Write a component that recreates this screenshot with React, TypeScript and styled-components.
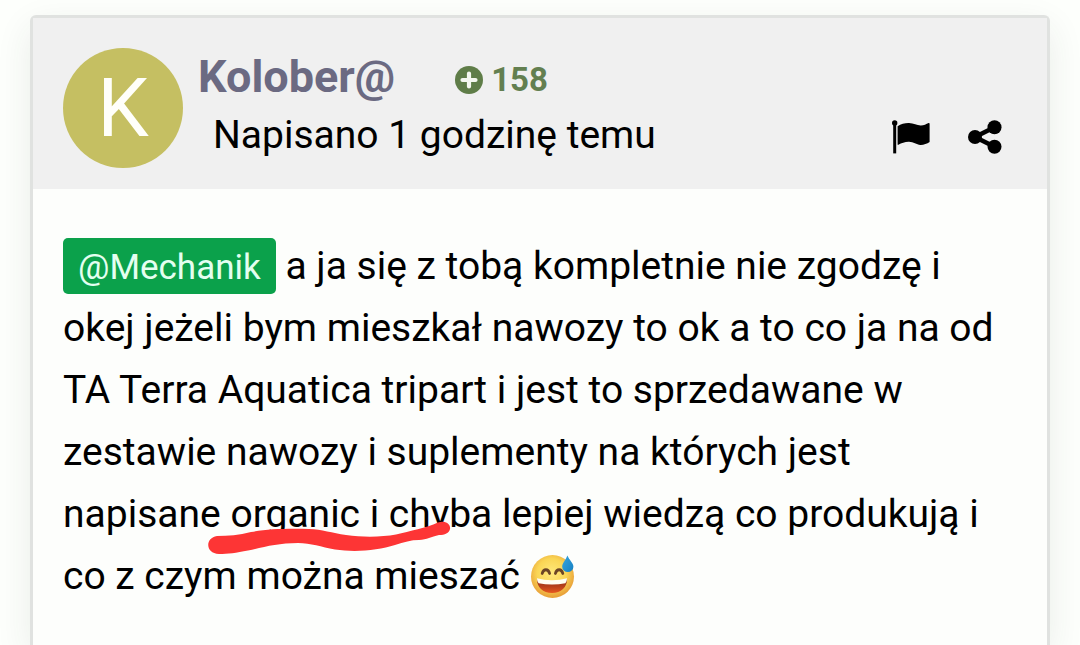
import React from 'react';
import styled, { createGlobalStyle } from 'styled-components';

const GlobalStyle = createGlobalStyle`
  * { box-sizing: border-box; }
  html { background: #fdfffc; }
  body {
    margin: 0;
    font-family: Roboto, "Noto Sans", sans-serif;
    color: #000;
  }
`;

const Page = styled.main`
  display: flex;
  flex-direction: column;
  min-height: 100vh;
  padding: 15px 30px 0;
  overflow: hidden;
`;

const Card = styled.article`
  flex: 1;
  border: 3px solid #e0e2e0;
  border-bottom: 0;
  border-radius: 6px 6px 0 0;
  background: #fdfefc;
  box-shadow: 0 12px 36px rgba(40, 60, 40, 0.09);
`;

const Header = styled.header`
  display: flex;
  align-items: flex-start;
  gap: 15px;
  padding: 30px 45px 21px 30px;
  background: #f0f0f0;
`;

const Avatar = styled.a`
  display: flex;
  align-items: center;
  justify-content: center;
  flex: none;
  width: 120px;
  height: 120px;
  border-radius: 50%;
  background: #c5bf62;
  color: #fffffa;
  font-size: 82px;
  line-height: 120px;
  text-decoration: none;
`;

const Meta = styled.div`
  flex: 1;
  min-width: 0;
`;

const TitleRow = styled.div`
  display: flex;
  align-items: center;
  gap: 60px;
`;

const Author = styled.a`
  color: #6b6a82;
  font-size: 45px;
  font-weight: 700;
  line-height: 58px;
  text-decoration: none;
`;

const Score = styled.span`
  display: inline-flex;
  align-items: center;
  gap: 8px;
  padding-top: 6px;
  color: #637f50;
  font-size: 33px;
  font-weight: 700;
  line-height: 40px;
`;

const SubRow = styled.div`
  display: flex;
  align-items: center;
  justify-content: space-between;
  padding-left: 15px;
`;

const Time = styled.time`
  font-size: 39px;
  line-height: 58px;
`;

const Actions = styled.div`
  display: flex;
  align-items: center;
  gap: 38px;
  padding-top: 4px;
`;

const IconButton = styled.button`
  display: flex;
  padding: 0;
  border: 0;
  background: none;
  color: #000;
  cursor: pointer;
`;

const Body = styled.p`
  margin: 0;
  padding: 46px 30px 30px;
  font-size: 39px;
  line-height: 62px;
`;

const Mention = styled.a`
  display: inline-block;
  padding: 4px 15px 0;
  border-radius: 5px;
  background: #0ba14b;
  color: #e4fff0;
  font-size: 35px;
  line-height: 52px;
  text-decoration: none;
`;

const Marked = styled.span`
  position: relative;
`;

const Stroke = styled.svg`
  position: absolute;
  left: -22px;
  top: 28px;
  pointer-events: none;
`;

const Emoji = styled.svg`
  vertical-align: -10px;
`;

const PlusIcon = () => (
  <svg width="28" height="28" viewBox="0 0 28 28" aria-hidden="true">
    <circle cx="14" cy="14" r="14" fill="#5f7d48" />
    <path d="M14 7.500v13M7.500 14h13" stroke="#f4f7ef" strokeWidth="4.200" strokeLinecap="round" />
  </svg>
);

const FlagIcon = () => (
  <svg width="38" height="34" viewBox="0 0 38 34" fill="currentColor" aria-hidden="true">
    <circle cx="2.7" cy="2.9" r="2.7" />
    <path d="M1.2 3h3v30.4h-3z" />
    <path d="M5.6 6.2C9 3.8 13 2.9 17 3c4.600 .2 8 2.400 11.600 2.500 3 .1 5.600-1.200 8-2.400.5-.3 1 0 1 .6v18.300c-2.600 1.800-6 3-9.200 2.900-4-.1-6.800-3-11.400-3.100-4-.1-7.400 1.300-10.600 3-.5.2-.8 0-.8-.5z" />
  </svg>
);

const ShareIcon = () => (
  <svg width="34" height="34" viewBox="0 0 34 34" fill="currentColor" aria-hidden="true">
    <path d="M27 7L7 17l20 10" fill="none" stroke="currentColor" strokeWidth="4.600" />
    <circle cx="7" cy="17" r="7" />
    <circle cx="26.500" cy="7.200" r="7" />
    <circle cx="26.500" cy="26.800" r="7" />
  </svg>
);

const SweatSmile = () => (
  <Emoji width="45" height="46" viewBox="0 0 45 46" role="img" aria-label="uśmiech z kroplą potu">
    <defs>
      <radialGradient id="face" cx="0.48" cy="0.42" r="0.56">
        <stop offset="0" stopColor="#ffe97c" />
        <stop offset="0.6" stopColor="#fad655" />
        <stop offset="1" stopColor="#e9a23a" />
      </radialGradient>
      <linearGradient id="mouth" x1="0" y1="0" x2="0" y2="1">
        <stop offset="0" stopColor="#8f321c" />
        <stop offset="0.5" stopColor="#b53f1c" />
        <stop offset="1" stopColor="#e8581f" />
      </linearGradient>
      <linearGradient id="drop" x1="0" y1="0" x2="1" y2="1">
        <stop offset="0" stopColor="#3aa6dc" />
        <stop offset="1" stopColor="#1480c4" />
      </linearGradient>
    </defs>
    <circle cx="22.500" cy="23.500" r="21.500" fill="url(#face)" />
    <path d="M12.200 20.500c1.200-5 6.200-5 7.400 0M25.400 20.500c1.200-5 6.200-5 7.400 0" fill="none" stroke="#6b4526" strokeWidth="2.800" strokeLinecap="round" />
    <path d="M7 26c9.500 2.600 20.500 2.600 30 0 .4 8-6 14-15 14S6.600 34 7 26z" fill="url(#mouth)" />
    <path d="M7 25.300c9.500 2.600 20.500 2.600 30 0 0 2.200-.6 4-1.700 5-8.500 1.700-18.100 1.700-26.600 0-1.100-1-1.700-2.800-1.700-5z" fill="#fffdf4" />
    <path d="M37.400 2.500c1.800 4.500 6 7.500 6 11.200a5.600 5.400 0 0 1-11.200 0C32.200 10 35.800 7 37.400 2.500z" fill="url(#drop)" />
  </Emoji>
);

const RedStroke = () => (
  <Stroke width="246" height="46" viewBox="0 0 246 46" aria-hidden="true">
    <path
      d="M9 17C20 17 31 16 43 13C59 10 77 9.500 101 10C114 10.500 124 14 138 16C156 18.500 174 18 188 15.500C202 12 218 9 230 3.500C237 1 243 5 242 10C241 14 237 16 231 16C223 18 219 20.500 211 21C203 21 196 23 187 26C170 31.500 147 33.500 127 30.500C113 28 103 24 90 24C70 24 56 28 40 31.500C28 34 20 35 11 35C-3 34-3 19 9 17Z"
      fill="#fd3535"
    />
  </Stroke>
);

export default function App() {
  return (
    <>
      <GlobalStyle />
      <Page>
        <Card>
          <Header>
            <Avatar href="#profile">K</Avatar>
            <Meta>
              <TitleRow>
                <Author href="#profile">Kolober@</Author>
                <Score>
                  <PlusIcon />
                  158
                </Score>
              </TitleRow>
              <SubRow>
                <Time>Napisano 1 godzinę temu</Time>
                <Actions>
                  <IconButton type="button" aria-label="Zgłoś">
                    <FlagIcon />
                  </IconButton>
                  <IconButton type="button" aria-label="Udostępnij">
                    <ShareIcon />
                  </IconButton>
                </Actions>
              </SubRow>
            </Meta>
          </Header>
          <Body>
            <Mention href="#mechanik">@Mechanik</Mention> a ja się z tobą kompletnie nie zgodzę i
            okej jeżeli bym mieszkał nawozy to ok a to co ja na od TA Terra Aquatica tripart i jest
            to sprzedawane w zestawie nawozy i suplementy na których jest napisane{' '}
            <Marked>
              organic i chyba
              <RedStroke />
            </Marked>{' '}
            lepiej wiedzą co produkują i co z czym można mieszać <SweatSmile />
          </Body>
        </Card>
      </Page>
    </>
  );
}
